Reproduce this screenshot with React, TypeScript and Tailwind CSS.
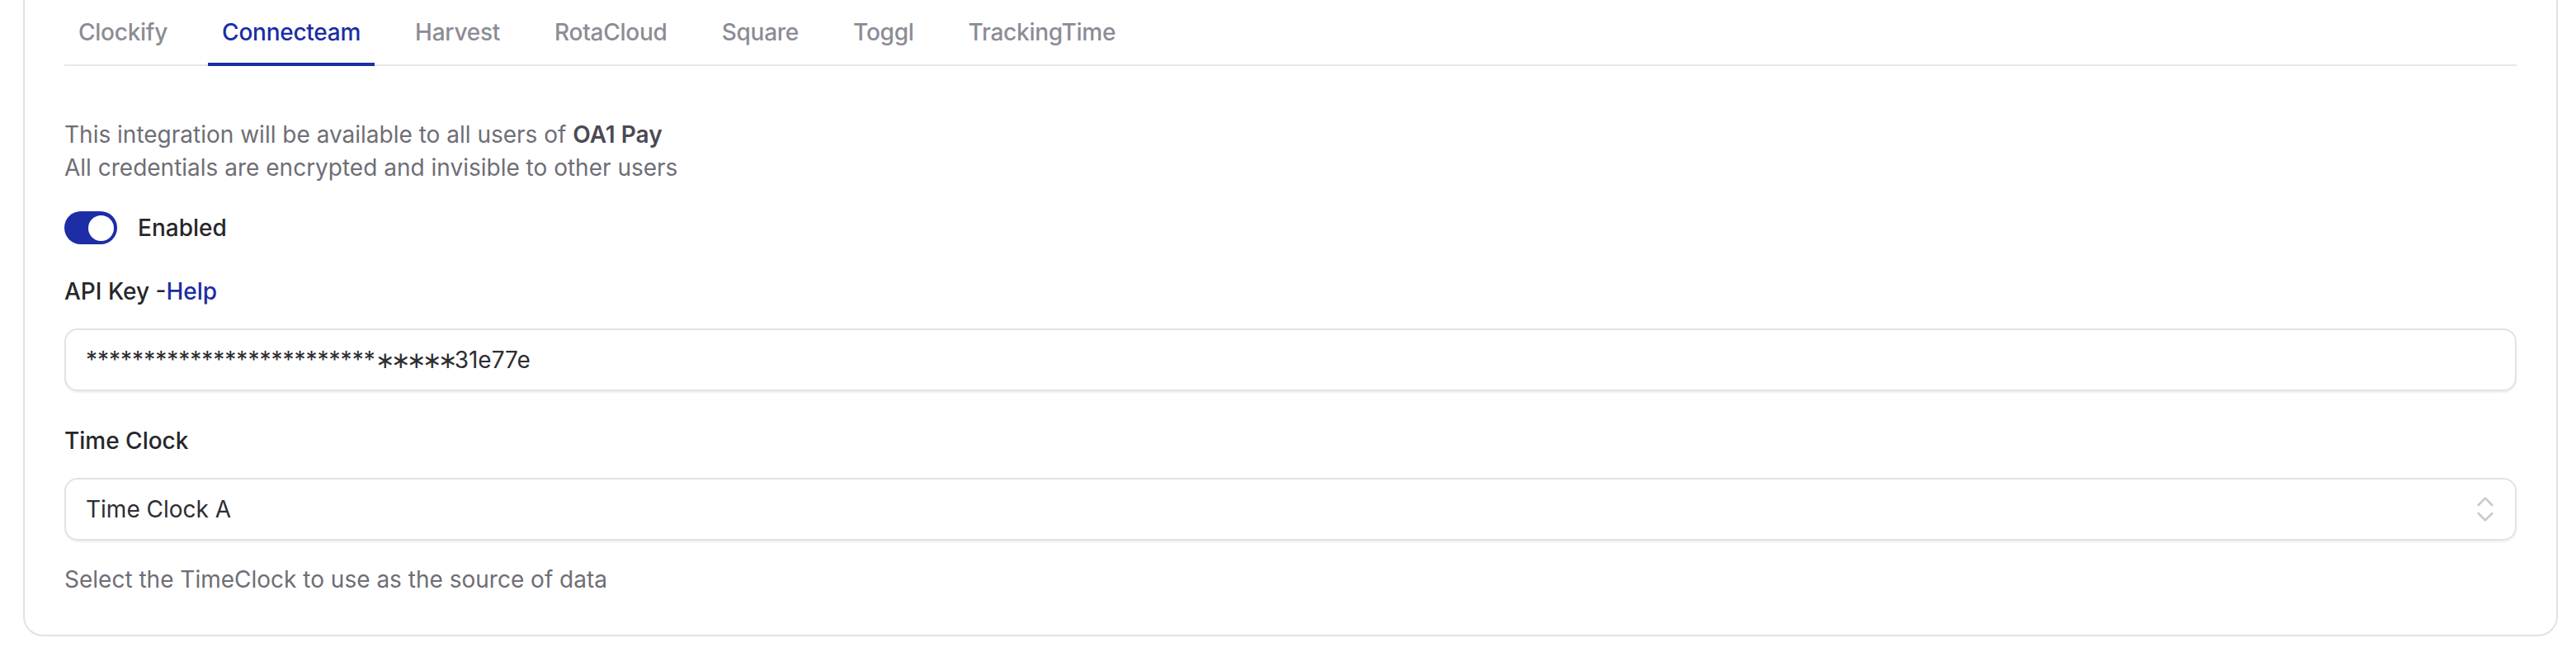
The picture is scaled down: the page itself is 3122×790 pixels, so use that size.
import { ChevronsUpDown } from "lucide-react";

const tabs = ["Clockify", "Connecteam", "Harvest", "RotaCloud", "Square", "Toggl", "TrackingTime"];

export default function App() {
  return (
    <div className="min-h-[790px] bg-white font-['Inter',sans-serif] pl-[28px] pr-[22px]">
      <div className="border-2 border-t-0 border-[#e2e2e5] rounded-b-[24px] px-[48px] pb-[47px]">
        {/* Tabs */}
        <nav className="flex gap-[32px] border-b-2 border-[#e7e7ea] pt-[2px]">
          {tabs.map((tab) => (
            <button
              key={tab}
              className={
                tab === "Connecteam"
                  ? "-mb-[2px] border-b-4 border-[#1c2da6] px-[17px] pt-[17px] pb-[17px] text-[28px] leading-[40px] font-medium tracking-[-0.25px] text-[#1c2da6]"
                  : "-mb-[2px] border-b-4 border-transparent px-[17px] pt-[17px] pb-[17px] text-[28px] leading-[40px] font-medium tracking-[-0.25px] text-[#8c8c95]"
              }
            >
              {tab}
            </button>
          ))}
        </nav>

        {/* Description */}
        <div className="mt-[63px] text-[28px] leading-[40px] text-[#6e6e76]">
          <p>
            This integration will be available to all users of{" "}
            <span className="font-semibold text-[#4a4a52]">OA1 Pay</span>
          </p>
          <p>All credentials are encrypted and invisible to other users</p>
        </div>

        {/* Toggle */}
        <div className="mt-[33px] flex items-center gap-[25px]">
          <button className="flex h-[40px] w-[64px] items-center justify-end rounded-full bg-[#1c2da6] p-[4px]">
            <span className="h-[31px] w-[31px] rounded-full bg-white" />
          </button>
          <span className="text-[28px] leading-[40px] font-medium text-[#27272a]">Enabled</span>
        </div>

        {/* API Key */}
        <label className="mt-[37px] block text-[28px] leading-[40px] font-medium text-[#27272a]">
          API Key -<a className="text-[#1c2da6]">Help</a>
        </label>
        <div className="mt-[25px] flex h-[76px] items-center rounded-[16px] border-2 border-[#e2e2e5] px-[24px] shadow-[0_2px_2px_rgba(0,0,0,0.06)] text-[28px] text-[#2e2e33]">
          <span>{"*************************"}</span>
          <span className="tracking-[-4px]">{"∗∗∗∗∗"}</span>
          <span className="ml-[1px]">31e77e</span>
        </div>

        {/* Time Clock */}
        <label className="mt-[40px] block text-[28px] leading-[40px] font-medium text-[#27272a]">
          Time Clock
        </label>
        <div className="mt-[25px] flex h-[76px] items-center justify-between rounded-[16px] border-2 border-[#e2e2e5] pl-[24px] pr-[16px] shadow-[0_2px_2px_rgba(0,0,0,0.06)] text-[28px] text-[#2e2e33]">
          <span>Time Clock A</span>
          <ChevronsUpDown size={40} strokeWidth={1.5} className="text-[#c8c8cc]" />
        </div>
        <p className="mt-[27px] text-[28px] leading-[40px] text-[#6e6e76]">
          Select the TimeClock to use as the source of data
        </p>
      </div>
    </div>
  );
}
